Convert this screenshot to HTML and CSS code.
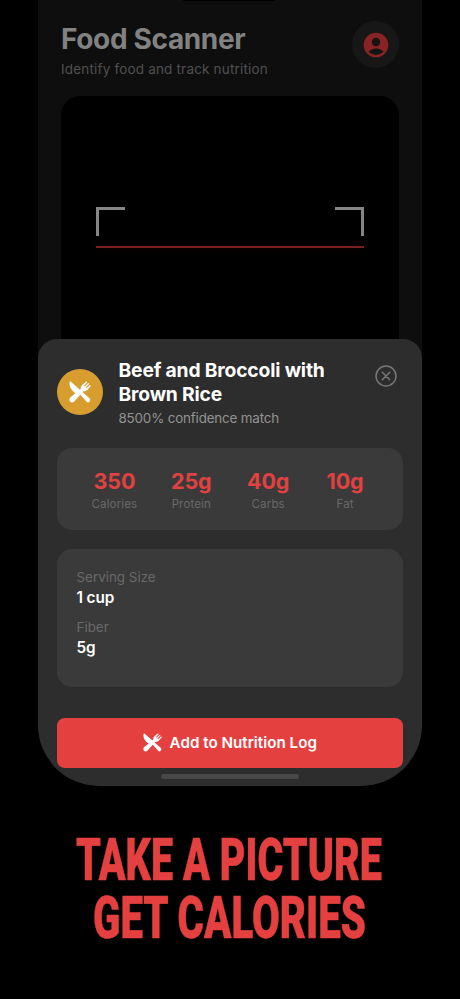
FILE: index.html
```html
<!DOCTYPE html>
<html lang="en">
<head>
<meta charset="utf-8">
<title>Food Scanner</title>
<link rel="stylesheet" href="styles.css">
</head>
<body>
<svg class="defs" width="0" height="0" aria-hidden="true">
  <symbol id="utensils" viewBox="0 0 20 20">
    <path d="M.5 1C.2 4 1 7 3.500 9.200L6 11.300 8 9.800 16 18.800Q17.300 20 18.700 18.800 20 17.300 18.800 15.900L1.500.5Q.7.200.5 1Z"/>
    <path d="M.8 15.300 10.600 7.200C10.600 4.800 11.800 3.600 13 2.700L15.700.4Q16.800.5 16.300 1.400L13.700 4.300 14.400 5 17.500 1.800Q18.700 1.600 18.200 2.700L15.200 5.800 15.900 6.500 18.900 3.700Q20 3.800 19.600 4.800L17 7.700C15.900 9 14.600 9.500 12.900 9.400L4.600 18.800Q2.800 20.200 1.100 18.800-.3 17 .8 15.300Z"/>
  </symbol>
</svg>
<main class="phone">
  <div class="island"></div>
  <header class="header">
    <div>
      <h1 class="title">Food Scanner</h1>
      <p class="subtitle">Identify food and track nutrition</p>
    </div>
    <div class="profile">
      <svg width="26" height="26" viewBox="0 0 26 26"><circle cx="13" cy="13" r="12.300" fill="#8a2323"/><circle cx="13" cy="10" r="4.200" fill="#141414"/><path d="M5.700 20C8 15.300 18 15.300 20.300 20Q17 23 13 23T5.700 20Z" fill="#141414"/></svg>
    </div>
  </header>
  <section class="viewfinder">
    <div class="corners"><i class="corner left"></i><i class="corner right"></i></div>
    <div class="scanline"></div>
  </section>
  <section class="sheet">
    <div class="meal">
      <div class="badge"><svg width="22" height="22"><use href="#utensils"/></svg></div>
      <div class="meal-text">
        <h2>Beef and Broccoli with<br>Brown Rice</h2>
        <p class="confidence">8500% confidence match</p>
      </div>
      <svg class="close" width="22" height="22" viewBox="0 0 22 22"><circle cx="11" cy="11" r="10"/><path d="M7.300 7.300l7.400 7.400M14.700 7.300l-7.400 7.400"/></svg>
    </div>
    <div class="card stats">
      <div><b>350</b><span>Calories</span></div>
      <div><b>25g</b><span>Protein</span></div>
      <div><b>40g</b><span>Carbs</span></div>
      <div><b>10g</b><span>Fat</span></div>
    </div>
    <dl class="card details">
      <dt>Serving Size</dt><dd>1 cup</dd>
      <dt>Fiber</dt><dd>5g</dd>
    </dl>
    <div class="button"><svg width="19" height="19"><use href="#utensils"/></svg><span>Add to Nutrition Log</span></div>
    <div class="home"></div>
  </section>
</main>
<svg class="headline" width="460" height="130" viewBox="0 0 460 130">
  <text x="76" y="59.500" textLength="306" lengthAdjust="spacingAndGlyphs">TAKE A PICTURE</text>
  <text x="93" y="117.500" textLength="273" lengthAdjust="spacingAndGlyphs">GET CALORIES</text>
</svg>
</body>
</html>
```
FILE: styles.css
```css
* { box-sizing: border-box; }
body { margin: 0; width: 460px; height: 999px; overflow: hidden; background: #000; font-family: Inter, "Liberation Sans", sans-serif; }
h1, h2, p, dl, dd { margin: 0; }
.defs { position: absolute; }
.phone { position: relative; width: 383.500px; height: 786px; margin-left: 38px; padding: 0 22.500px 0 23px; background: #0e0e0e; border-radius: 0 0 61px 61px; overflow: hidden; }
.island { position: absolute; left: 145px; top: 0; width: 92px; height: 1px; background: #000; }
.header { display: flex; justify-content: space-between; height: 96px; padding-top: 21px; }
.title { font-size: 28px; line-height: 36px; font-weight: 700; letter-spacing: -.35px; color: #828282; }
.subtitle { margin-top: 3px; font-size: 13.500px; line-height: 18px; letter-spacing: .18px; color: #505050; white-space: nowrap; }
.profile { display: flex; align-items: center; justify-content: center; width: 47px; height: 47px; border-radius: 50%; background: #171717; }
.viewfinder { height: 300px; padding: 111px 35px 0; background: #000; border-radius: 19px; }
.corners { display: flex; justify-content: space-between; }
.corner { width: 29px; height: 29px; border: 0 solid #858585; border-top-width: 3px; }
.left { border-left-width: 3px; }
.right { border-right-width: 3px; }
.scanline { height: 2px; margin-top: 9.500px; background: #7b2022; box-shadow: 0 0 9px rgba(160, 20, 20, .25); }
.sheet { position: absolute; inset: 339px 0 0; padding: 0 19px; background: #2d2d2d; border-radius: 19px 19px 0 0; }
.meal { display: flex; height: 109px; }
.badge { display: flex; align-items: center; justify-content: center; width: 46px; height: 46px; margin-top: 30px; border-radius: 50%; background: #d79e2f; }
.badge svg, .button svg { fill: #fff; }
.meal-text { flex: 1; margin: 20px 0 0 15.500px; white-space: nowrap; }
h2 { font-size: 19.300px; line-height: 23.500px; font-weight: 700; letter-spacing: -.18px; color: #fff; }
.confidence { margin-top: 3px; font-size: 13.400px; line-height: 18px; letter-spacing: -.17px; color: #939393; }
.close { margin: 25.500px 6px 0 0; fill: none; stroke: #777; stroke-width: 1.500; stroke-linecap: round; }
.card { background: #3a3a3a; border-radius: 15px; }
.stats { display: grid; grid-template-columns: repeat(4, 1fr); height: 82px; padding: 19px 19px 0; text-align: center; }
.stats b { display: block; font-size: 21.500px; line-height: 28px; font-weight: 700; letter-spacing: -.1px; color: #e24142; }
.stats span { display: block; margin-top: 2px; font-size: 11.500px; line-height: 14px; letter-spacing: .15px; color: #696969; }
.details { height: 138px; margin-top: 19px; padding: 19px 19.500px; }
dt { font-size: 13.400px; line-height: 18px; color: #696969; }
dd { margin: 1px 0 9px; font-size: 15.300px; line-height: 22px; font-weight: 600; letter-spacing: -.1px; color: #fff; }
.button { display: flex; align-items: center; justify-content: center; gap: 8px; height: 50px; margin-top: 30.500px; border-radius: 8px; background: #e54040; color: #fff; font-size: 15.200px; font-weight: 600; white-space: nowrap; }
.home { width: 138px; height: 5px; margin: 6px auto 0; border-radius: 3px; background: #484848; }
.headline { display: block; margin-top: 34px; overflow: visible; font-family: Roboto, sans-serif; font-size: 58.500px; font-weight: 900; fill: #e54040; stroke: #e54040; stroke-width: .5px; }
```
